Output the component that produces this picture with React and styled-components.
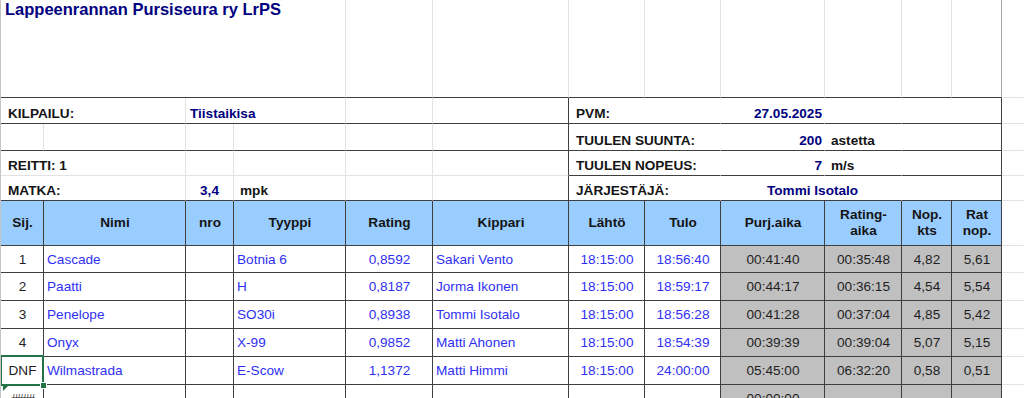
import React from "react";
import styled, { createGlobalStyle, css } from "styled-components";

const GlobalStyle = createGlobalStyle`
  html, body {
    margin: 0;
    padding: 0;
    background: #fff;
  }
  body {
    font-family: "Liberation Sans", Arial, sans-serif;
  }
`;

const lines = {
  dark: "#3f3f3f",
  mid: "#a8a8a8",
  light: "#e2e2e2",
  none: "transparent",
};

const Sheet = styled.div`
  display: grid;
  grid-template-columns: 43px 142px 48px 112px 87px 136px 76px 76px 104px 77px 50px 50px 1fr;
  grid-template-rows: 98px 26px 27px 25px 25px 45px 27px repeat(5, 28px);
  width: 1023px;
  height: 398px;
  overflow: hidden;
  border-left: 1px solid #c4c4c4;
  font-size: 13.6px;
  line-height: 16px;
  color: #1f1f1f;
`;

const Cell = styled.div`
  grid-column: span ${(p) => p.$span || 1};
  display: flex;
  align-items: center;
  justify-content: ${(p) =>
    ({ left: "flex-start", center: "center", right: "flex-end" })[p.$align || "left"]};
  text-align: ${(p) => p.$align || "left"};
  padding: 0 ${(p) => (p.$pr ?? 2)}px 0 ${(p) => (p.$pl ?? 3)}px;
  border-right: 1px solid ${(p) => lines[p.$r || "dark"]};
  border-bottom: 1px solid ${(p) => lines[p.$b || "dark"]};
  background: ${(p) => p.$bg || "#fff"};
  white-space: nowrap;
  overflow: visible;
  min-width: 0;
  position: relative;
`;

const Title = styled(Cell)`
  align-items: flex-start;
  padding-left: 4px;
  font-size: 16.5px;
  line-height: 18px;
  font-weight: 700;
  color: #000080;
`;

const Label = styled(Cell)`
  align-items: flex-end;
  padding-left: 7px;
  padding-bottom: 1px;
  font-weight: 700;
  color: #141414;
`;

const Value = styled(Label)`
  padding-left: ${(p) => (p.$pl ?? 4)}px;
  color: #000080;
`;

const Unit = styled(Label)`
  padding-left: 6px;
`;

const Head = styled(Cell)`
  justify-content: center;
  text-align: center;
  background: #99ccff;
  font-weight: 700;
  color: #141414;
`;

const Data = styled(Cell)`
  color: ${(p) => (p.$blue ? "#3030f4" : "#1f1f1f")};
  background: ${(p) => (p.$grey ? "#c0c0c0" : "#fff")};
  padding-top: 1px;
`;

const Selected = styled(Data)`
  z-index: 2;
  &::after {
    content: "";
    position: absolute;
    left: -1px;
    top: -2px;
    right: -1px;
    bottom: -2px;
    border: 2px solid #217346;
  }
  &::before {
    content: "";
    position: absolute;
    right: -4px;
    bottom: -5px;
    width: 5px;
    height: 5px;
    background: #217346;
    border: 1px solid #fff;
    z-index: 3;
  }
`;

const Flagged = styled(Data)`
  font-size: 12px;
  letter-spacing: -1px;
  &::before {
    content: "";
    position: absolute;
    left: 2px;
    top: 0;
    width: 0;
    height: 0;
    border-top: 6px solid #217346;
    border-right: 6px solid transparent;
  }
`;

const Spare = styled(Cell)`
  border-right-color: transparent;
  border-bottom-color: ${lines.light};
`;

const columns = [
  { key: "sij", head: "Sij.", align: "center" },
  { key: "nimi", head: "Nimi", align: "left", blue: true },
  { key: "nro", head: "nro", align: "center", blue: true },
  { key: "tyyppi", head: "Tyyppi", align: "left", blue: true },
  { key: "rating", head: "Rating", align: "center", blue: true },
  { key: "kippari", head: "Kippari", align: "left", blue: true },
  { key: "lahto", head: "Lähtö", align: "center", blue: true },
  { key: "tulo", head: "Tulo", align: "center", blue: true },
  { key: "purj", head: "Purj.aika", align: "center", grey: true },
  { key: "ratingAika", head: ["Rating-", "aika"], align: "center", grey: true },
  { key: "nop", head: ["Nop.", "kts"], align: "center", grey: true },
  { key: "ratNop", head: ["Rat", "nop."], align: "center", grey: true },
];

const results = [
  ["1", "Cascade", "", "Botnia 6", "0,8592", "Sakari Vento", "18:15:00", "18:56:40", "00:41:40", "00:35:48", "4,82", "5,61"],
  ["2", "Paatti", "", "H", "0,8187", "Jorma Ikonen", "18:15:00", "18:59:17", "00:44:17", "00:36:15", "4,54", "5,54"],
  ["3", "Penelope", "", "SO30i", "0,8938", "Tommi Isotalo", "18:15:00", "18:56:28", "00:41:28", "00:37:04", "4,85", "5,42"],
  ["4", "Onyx", "", "X-99", "0,9852", "Matti Ahonen", "18:15:00", "18:54:39", "00:39:39", "00:39:04", "5,07", "5,15"],
  ["DNF", "Wilmastrada", "", "E-Scow", "1,1372", "Matti Himmi", "18:15:00", "24:00:00", "05:45:00", "06:32:20", "0,58", "0,51"],
  ["####", "", "", "", "", "", "", "", "00:00:00", "", "", ""],
];

const info = [
  { label: "PVM:", value: "27.05.2025" },
  { label: "TUULEN SUUNTA:", value: "200", unit: "astetta" },
  { label: "TUULEN NOPEUS:", value: "7", unit: "m/s" },
];

function InfoRight({ label, value, unit }) {
  return (
    <>
      <Label $span={2} $r="none">{label}</Label>
      <Value $r="none" $align="right">{value}</Value>
      <Unit $r="none">{unit}</Unit>
      <Cell $span={2} />
      <Spare />
    </>
  );
}

function ResultRow({ row, index }) {
  return (
    <>
      {row.map((value, i) => {
        const col = columns[i];
        const props = {
          $align: col.align,
          $blue: col.blue,
          $grey: col.grey,
        };
        if (i === 0 && value === "DNF") {
          return <Selected key={col.key} {...props}>{value}</Selected>;
        }
        if (i === 0 && value === "####") {
          return <Flagged key={col.key} {...props}>{value}</Flagged>;
        }
        return <Data key={col.key} {...props}>{value}</Data>;
      })}
      <Spare />
    </>
  );
}

export default function App() {
  return (
    <>
      <GlobalStyle />
      <Sheet>
        {/* otsikko */}
        <Title $span={4} $r="light">Lappeenrannan Pursiseura ry LrPS</Title>
        {[...Array(7)].map((_, i) => (
          <Cell key={i} $r="light" />
        ))}
        <Cell $r="mid" />
        <Spare />

        {/* kilpailu / pvm */}
        <Label $span={2} $r="light">KILPAILU:</Label>
        <Value $span={2} $r="light">Tiistaikisa</Value>
        <Cell $r="light" />
        <Cell />
        <InfoRight {...info[0]} />

        {/* tyhjä rivi / tuulen suunta */}
        <Cell $r="light" />
        <Cell $r="light" />
        <Cell $r="light" />
        <Cell $r="light" />
        <Cell $r="light" />
        <Cell />
        <InfoRight {...info[1]} />

        {/* reitti / tuulen nopeus */}
        <Label $span={2} $r="light" $b="light">REITTI: 1</Label>
        <Cell $r="light" $b="light" />
        <Cell $r="light" $b="light" />
        <Cell $r="light" $b="light" />
        <Cell $b="light" />
        <InfoRight {...info[2]} />

        {/* matka / järjestäjä */}
        <Label $span={2} $r="light">MATKA:</Label>
        <Value $r="light" $align="center" $pl={2}>3,4</Value>
        <Unit $r="light">mpk</Unit>
        <Cell $r="light" />
        <Cell />
        <Label $span={2} $r="none">JÄRJESTÄJÄ:</Label>
        <Value $span={2} $r="none" $pl={46}>Tommi Isotalo</Value>
        <Cell $span={2} />
        <Spare />

        {/* sarakeotsikot */}
        {columns.map((col) => (
          <Head key={col.key}>
            {Array.isArray(col.head) ? (
              <span>
                {col.head[0]}
                <br />
                {col.head[1]}
              </span>
            ) : (
              col.head
            )}
          </Head>
        ))}
        <Spare />

        {results.map((row, i) => (
          <ResultRow key={i} row={row} index={i} />
        ))}
      </Sheet>
    </>
  );
}
